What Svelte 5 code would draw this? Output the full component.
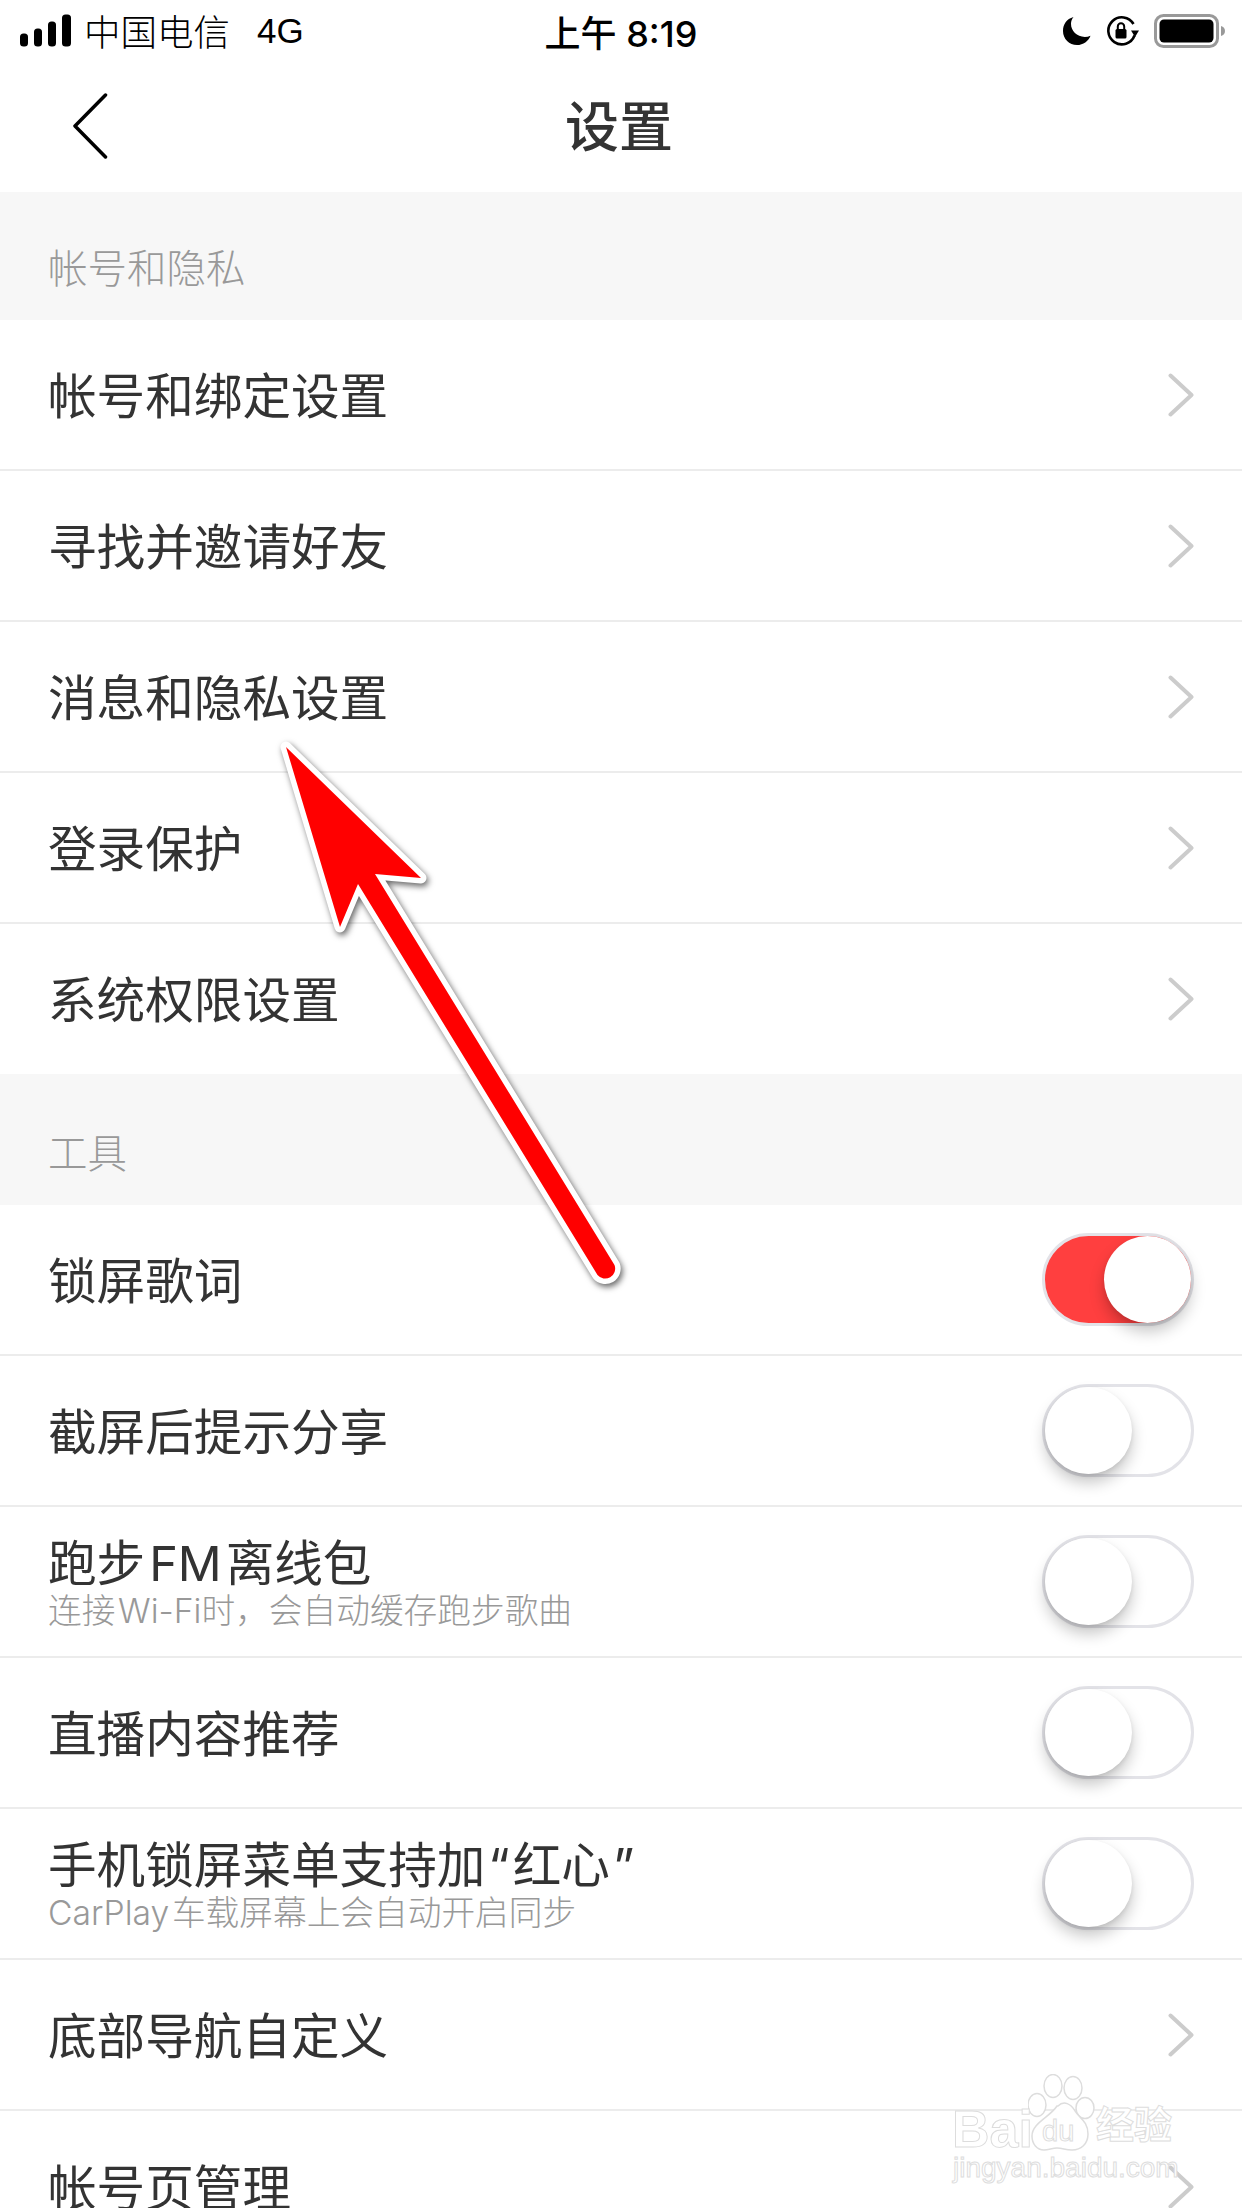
<script>
  const chev = (label) => ({ label, kind: 'chevron', sub: '', on: false });
  const tog = (label, on = false, sub = '') => ({ label, kind: 'toggle', on, sub });
  const parts = (label) => label.split(/([“”])/).filter(Boolean);
  const sections = [
    { title: '帐号和隐私', rows: ['帐号和绑定设置', '寻找并邀请好友', '消息和隐私设置', '登录保护', '系统权限设置'].map(chev) },
    {
      title: '工具',
      rows: [
        tog('锁屏歌词', true),
        tog('截屏后提示分享'),
        tog('跑步 FM 离线包', false, '连接 Wi-Fi时，会自动缓存跑步歌曲'),
        tog('直播内容推荐'),
        tog('手机锁屏菜单支持加“红心”', false, 'CarPlay 车载屏幕上会自动开启同步'),
        chev('底部导航自定义'),
        chev('帐号页管理')
      ]
    }
  ];
</script>

<div class="page">
  <header class="status">
    <div class="left">
      <svg class="signal" width="52" height="33" viewBox="0 0 52 33" aria-hidden="true">
        <rect x="0" y="19.500" width="8" height="13" rx="3.500" />
        <rect x="14" y="14.500" width="8" height="18" rx="3.500" />
        <rect x="28" y="7.500" width="8" height="25" rx="3.500" />
        <rect x="42" y="0.500" width="9" height="32" rx="3.500" />
      </svg>
      <span class="carrier">中国电信</span>
      <span class="net">4G</span>
    </div>
    <div class="time">上午 8:19</div>
    <div class="right">
      <svg width="30" height="30" viewBox="0 0 30 30" aria-hidden="true">
        <path d="M11.500 1C4.500 3 1 8.500 1 15c0 8 6.300 14 14 14 6.200 0 11.500-3.800 13.500-9.300-1.800.8-3.700 1.200-5.700 1.200C14.800 20.900 9 15 9 7.800c0-2.500.9-4.800 2.500-6.800z" fill="#000" />
      </svg>
      <svg width="34" height="32" viewBox="0 0 34 32" aria-hidden="true">
        <path d="M28.500 20.500A13.500 13.500 0 1 1 27.500 9" fill="none" stroke="#000" stroke-width="2.600" />
        <path d="M25 15.500h8l-4 6.500z" fill="#000" />
        <rect x="9.500" y="14" width="11" height="9.500" rx="1.500" fill="#000" />
        <path d="M11.800 14.500v-3a3.200 3.200 0 0 1 6.400 0v3" fill="none" stroke="#000" stroke-width="2" />
      </svg>
      <svg width="72" height="34" viewBox="0 0 72 34" aria-hidden="true">
        <rect x="1.500" y="1.500" width="62" height="31" rx="8" fill="none" stroke="#999" stroke-width="3" />
        <rect x="5.500" y="5.500" width="54" height="23" rx="4.500" fill="#000" />
        <path d="M67 12c2.500.5 4 2.500 4 5s-1.500 4.500-4 5z" fill="#999" />
      </svg>
    </div>
  </header>

  <nav class="nav">
    <svg class="back" width="36" height="66" viewBox="0 0 36 66" aria-hidden="true">
      <path d="M33.500 2 3 33l30.500 31" fill="none" stroke="#000" stroke-width="3.500" stroke-linecap="round" stroke-linejoin="round" />
    </svg>
    <h1>设置</h1>
  </nav>

  {#each sections as section}
    <section>
      <h2>{section.title}</h2>
      {#each section.rows as row}
        <div class="row">
          <div class="text">
            <span class="label">{#each parts(row.label) as p}{#if p === '“' || p === '”'}<span class="q">{p}</span>{:else}{p}{/if}{/each}</span>
            {#if row.sub}<span class="sub">{row.sub}</span>{/if}
          </div>
          {#if row.kind === 'chevron'}
            <svg class="chev" width="26" height="44" viewBox="0 0 26 44" aria-hidden="true">
              <path d="M2.500 2.500 23.500 22l-21 19.500" fill="none" stroke="#ccc" stroke-width="4" stroke-linecap="round" stroke-linejoin="round" />
            </svg>
          {:else}
            <div class="toggle" class:on={row.on}><span class="knob"></span></div>
          {/if}
        </div>
      {/each}
    </section>
  {/each}

  <svg class="arrow" width="1242" height="2208" viewBox="0 0 1242 2208" aria-hidden="true">
    <path class="arrow-shape" d="M286 747 421 878 375 874 614.500 1265a10 10 0 0 1-17 10L358 884 340 927z" />
  </svg>

  <div class="mark">
    <svg class="paw" width="70" height="78" viewBox="0 0 70 78" aria-hidden="true">
      <ellipse cx="9" cy="31" rx="9" ry="11.500" />
      <ellipse cx="25" cy="12" rx="9" ry="11.500" />
      <ellipse cx="45" cy="14" rx="9" ry="11.500" />
      <ellipse cx="57" cy="34" rx="9" ry="10.500" />
      <path d="M30 32c6-6 13-2 17 5s13 10 13 23c0 10-7 16-16 16-7 0-9-2-15-2-5 0-8 2-13 2C9 76 4 70 4 62c0-13 18-19 25-30z" />
    </svg>
    <span class="bai">Bai</span>
    <span class="du">du</span>
    <span class="jy">经验</span>
    <span class="url">jingyan.baidu.com</span>
  </div>
</div>

<style>
  :global(body) { margin: 0; background: #fff; }
  .page {
    position: relative;
    width: 1242px;
    height: 2208px;
    overflow: hidden;
    background: #fff;
    font-family: Inter, "Noto Sans CJK SC", sans-serif;
    color: #333;
  }
  .status {
    height: 64px;
    display: flex;
    align-items: center;
    justify-content: space-between;
    padding: 0 16px 3px 20px;
    color: #000;
    font-size: 36px;
    box-sizing: border-box;
  }
  .left, .right { display: flex; align-items: center; flex: 1; }
  .right { justify-content: flex-end; gap: 14px; }
  .carrier { margin-left: 12px; font-family: "Noto Sans CJK SC", sans-serif; font-weight: 300; font-size: 36.5px; }
  .net { margin-left: 27px; font-family: "Liberation Sans", sans-serif; font-size: 35px; }
  .signal { fill: #000; }
  .time { font-family: Inter, "Noto Sans CJK SC", sans-serif; font-size: 36px; font-weight: 500; white-space: nowrap; margin-right: 4px; }
  .nav {
    height: 128px;
    display: flex;
    align-items: center;
    justify-content: center;
    position: relative;
  }
  .back { position: absolute; left: 72px; top: 29px; }
  h1 { margin: 0 4px 0 0; font-size: 54px; font-weight: 500; line-height: 1; color: #333; }
  h2 {
    margin: 0;
    height: 128px;
    padding: 55px 0 0 48px;
    box-sizing: border-box;
    background: #f7f7f7;
    font-size: 39.5px;
    font-weight: 300;
    line-height: 44px;
    color: #999;
  }
  section + section h2 { height: 131px; padding-top: 58px; }
  section:first-of-type .row:last-child { height: 150px; }
  .row {
    height: 151px;
    box-sizing: border-box;
    display: flex;
    align-items: center;
    justify-content: space-between;
    padding: 0 48px;
    border-bottom: 2px solid #ececec;
  }
  section .row:nth-last-child(1) { border-bottom: 0; }
  .text { display: flex; flex-direction: column; margin-top: 4px; }
  .label { font-size: 48.6px; line-height: 58px; font-weight: 400; color: #333; white-space: nowrap; word-spacing: -0.2em; }
  .q { padding: 0 3px; }
  .sub { font-size: 33.7px; line-height: 40px; margin: -2px 0 2px; font-weight: 300; color: #999; white-space: nowrap; word-spacing: -0.2em; }
  .toggle {
    position: relative;
    width: 152px;
    height: 93px;
    box-sizing: border-box;
    border: 3px solid #e3e3e8;
    border-radius: 47px;
    background: #fff;
  }
  .toggle.on { background: #ff3f3f; }
  .knob {
    position: absolute;
    left: 0;
    top: 0;
    width: 87px;
    height: 87px;
    border-radius: 50%;
    background: #fff;
    box-shadow: 0 9px 15px rgba(0, 0, 0, 0.22), 0 2px 4px rgba(0, 0, 0, 0.08);
  }
  .toggle.on .knob { left: 59px; }
  .arrow { position: absolute; left: 0; top: 0; pointer-events: none; }
  .arrow-shape {
    fill: #f00;
    stroke: #fff;
    stroke-width: 11px;
    stroke-linejoin: round;
    paint-order: stroke;
    filter: drop-shadow(2px 3px 3px rgba(0, 0, 0, 0.6));
  }
  .mark { position: absolute; left: 950px; top: 2070px; width: 230px; height: 115px; }
  .mark span {
    position: absolute;
    white-space: nowrap;
    color: #fff;
    -webkit-text-stroke: 1px #ddd;
    line-height: 1;
    font-family: "Liberation Sans", "Noto Sans CJK SC", sans-serif;
  }
  .paw { position: absolute; left: 78px; top: 4px; fill: #fff; stroke: #ddd; stroke-width: 1.500; }
  .bai { left: 2px; top: 33px; font-size: 52px; font-weight: 700; }
  .du { left: 92px; top: 47px; font-size: 29px; }
  .jy { left: 146px; top: 36px; font-size: 38px; font-weight: 700; }
  .url { left: 3px; top: 84px; font-size: 28px; }
</style>
